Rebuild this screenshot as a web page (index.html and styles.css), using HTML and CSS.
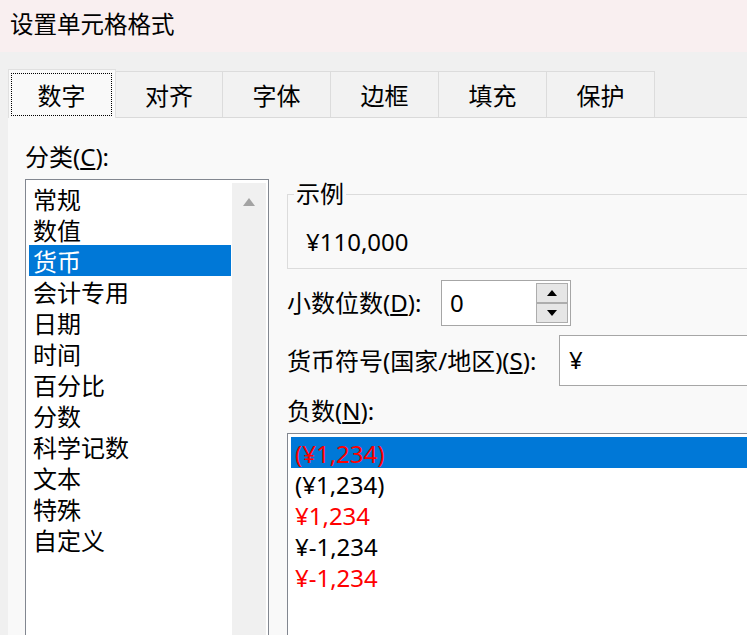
FILE: index.html
```html
<!DOCTYPE html>
<html lang="zh-CN">
<head>
<meta charset="utf-8">
<title>设置单元格格式</title>
<link rel="stylesheet" href="styles.css">
</head>
<body>
<div class="dialog">
  <div class="titlebar">设置单元格格式</div>
  <div class="tabs">
    <div class="tab active"><span class="focus">数字</span></div>
    <div class="tab">对齐</div>
    <div class="tab">字体</div>
    <div class="tab">边框</div>
    <div class="tab">填充</div>
    <div class="tab">保护</div>
  </div>
  <div class="panel">
    <div class="left">
      <div class="label">分类(<u>C</u>):</div>
      <div class="listbox cat">
        <ul class="items">
          <li>常规</li>
          <li>数值</li>
          <li class="sel">货币</li>
          <li>会计专用</li>
          <li>日期</li>
          <li>时间</li>
          <li>百分比</li>
          <li>分数</li>
          <li>科学记数</li>
          <li>文本</li>
          <li>特殊</li>
          <li>自定义</li>
        </ul>
        <div class="scrollbar"><span class="sb-up"></span></div>
      </div>
    </div>
    <div class="right">
      <fieldset class="sample">
        <legend>示例</legend>
        <div class="sample-value">¥110,000</div>
      </fieldset>
      <div class="row decimals">
        <div class="label w154">小数位数(<u>D</u>):</div>
        <div class="input spin-input">
          <span class="value">0</span>
          <div class="spin">
            <div class="spin-btn"><span class="arrow-up"></span></div>
            <div class="spin-btn"><span class="arrow-down"></span></div>
          </div>
        </div>
      </div>
      <div class="row currency">
        <div class="label w272">货币符号(国家/地区)(<u>S</u>):</div>
        <div class="input wide"><span class="value">¥</span></div>
      </div>
      <div class="label neg-label">负数(<u>N</u>):</div>
      <div class="listbox neg">
        <ul class="items">
          <li class="sel red">(¥1,234)</li>
          <li>(¥1,234)</li>
          <li class="red">¥1,234</li>
          <li>¥-1,234</li>
          <li class="red">¥-1,234</li>
        </ul>
      </div>
    </div>
  </div>
</div>
</body>
</html>
```
FILE: styles.css
```css
* { box-sizing: border-box; }
html, body {
  margin: 0;
  padding: 0;
  width: 747px;
  height: 635px;
  overflow: hidden;
  background: #f0f0f0;
}
body {
  font-family: "Noto Sans", "Noto Sans CJK SC", sans-serif;
  font-size: 24px;
  color: #000;
}
.dialog {
  display: flex;
  flex-direction: column;
  height: 635px;
}
.titlebar {
  height: 52px;
  line-height: 48px;
  padding-left: 10px;
  background: #f9eff0;
  font-size: 23.5px;
}
.tabs {
  height: 65px;
  display: flex;
  align-items: flex-end;
  padding-left: 8px;
  background: #f0f0f0;
}
.tab {
  width: 108px;
  height: 46px;
  border: 1px solid #dcdcdc;
  border-left: none;
  border-bottom: none;
  background: #f2f2f2;
  display: flex;
  align-items: center;
  justify-content: center;
  padding-top: 2px;
  line-height: 30px;
}
.tab.active {
  height: 49px;
  margin-bottom: -1px;
  position: relative;
  z-index: 1;
  background: #f9f9f9;
  border: 1px solid #e0e0e0;
  border-bottom: none;
  padding: 3px 3px 2px 2px;
}
.tab.active + .tab { width: 107px; }
.focus {
  flex: 1;
  align-self: stretch;
  border: 1px dotted #000;
  display: flex;
  align-items: center;
  justify-content: center;
  padding-top: 2px;
}
.panel {
  flex: 1;
  margin-left: 8px;
  background: #f9f9f9;
  border-top: 1px solid #dadada;
  display: grid;
  grid-template-columns: 244px 480px;
  column-gap: 18px;
  align-items: start;
  padding: 23px 0 0 17px;
  overflow: hidden;
  min-height: 0;
}
.label {
  line-height: 32px;
  height: 32px;
  white-space: nowrap;
  flex-shrink: 0;
}
.left .label { margin-bottom: 6px; }
.listbox {
  border: 1px solid #828790;
  background: #fff;
  display: flex;
  height: 500px;
}
.listbox.cat { padding: 3px 2px 0 3px; }
.items {
  list-style: none;
  margin: 0;
  padding: 0;
  flex: 1;
}
.items li {
  height: 31px;
  line-height: 31px;
  padding-left: 4px;
  padding-top: 1px;
  white-space: nowrap;
}
.items li.sel {
  background: #0078d7;
  color: #fff;
}
.items li.red { color: #ff0000; }
.scrollbar {
  width: 34px;
  margin-left: 1px;
  background: #f0f0f0;
  display: flex;
  justify-content: center;
  padding-top: 15px;
}
.sb-up {
  width: 0;
  height: 0;
  border-left: 6px solid transparent;
  border-right: 6px solid transparent;
  border-bottom: 8px solid #a3a3a3;
}
.right {
  padding-top: 41px;
  display: flex;
  flex-direction: column;
}
.sample {
  margin: 0;
  min-width: 0;
  border: 1px solid #dcdcdc;
  padding: 20px 18px 10px 18px;
}
.sample legend {
  padding: 0 2px;
  margin-left: -12px;
  line-height: 24px;
}
.sample-value {
  line-height: 32px;
  height: 32px;
}
.row {
  display: flex;
  align-items: center;
}
.decimals { margin-top: 11px; height: 46px; }
.currency { margin-top: 9px; height: 51px; }
.w154 { width: 154px; }
.w272 { width: 272px; }
.input {
  border: 1px solid #a6a6a6;
  background: #fff;
  display: flex;
  align-self: stretch;
  flex-shrink: 0;
}
.input .value {
  flex: 1;
  padding-left: 8px;
  display: flex;
  align-items: center;
  padding-bottom: 2px;
}
.spin-input { width: 130px; }
.spin {
  width: 32px;
  margin: 2px 2px 2px 0;
  display: flex;
  flex-direction: column;
}
.spin-btn {
  flex: 1;
  background: #e6e6e6;
  border: 1px solid #adadad;
  display: flex;
  align-items: center;
  justify-content: center;
}
.arrow-up, .arrow-down {
  width: 0;
  height: 0;
  border-left: 5px solid transparent;
  border-right: 5px solid transparent;
}
.arrow-up { border-bottom: 6px solid #000; }
.arrow-down { border-top: 6px solid #000; }
.wide { width: 220px; padding-left: 1px; }
.neg-label { margin-top: 9px; margin-bottom: 6px; }
.listbox.neg { padding: 3px; height: 300px; }
```
